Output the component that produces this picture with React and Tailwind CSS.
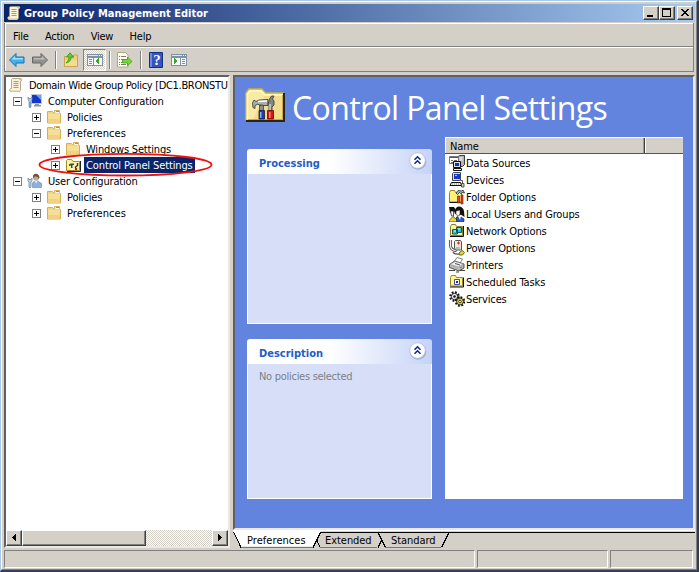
import React from "react";

function ScrollIcon() {
  return (
    <svg width="16" height="16" viewBox="0 0 16 16">
      <path d="M4.500 1.500h8.500l1 1.500-1.500 1v9l-1 1.500H2.500l-1-1.500 1-1.500h1v-9z" fill="#faf3d8" stroke="#9d947a" strokeWidth=".8" />
      <path d="M11 2l2.500-.5.8 1.500H11zM2 13.500h9l.5 1.500H3z" fill="#d6c793" />
      <path d="M5.500 4.500h5M5.500 6.500h5M5.500 8.500h5M5.500 10.500h5" stroke="#a39b80" />
    </svg>
  );
}

function FolderIcon() {
  return (
    <svg width="16" height="16" viewBox="0 0 16 16">
      <path d="M1.500 2.500h5l1 1h1v-2h5v2l1 1v9.500h-13z" fill="#f2d583" stroke="#d3ae5c" />
      <path d="M9.500 2h3.500v2h-3.500z" fill="#fff" />
      <path d="M10 2.500h3" stroke="#6f9cc0" />
      <path d="M2 5h12v9H2z" fill="#f7df98" />
      <path d="M2 10h12v4H2z" fill="#f1d281" />
    </svg>
  );
}

function ToolsFolderIcon() {
  return (
    <svg width="16" height="16" viewBox="0 0 16 16">
      <path d="M1.500 13.500v-10l1-1h4l1.500 2h6.500v9z" fill="#fbf3a2" stroke="#a48e1d" />
      <path d="M15.500 4v10.500H2" fill="none" stroke="#222" />
      <path d="M4 9V7.500L5.500 6.500H9v1.500H7.500v3H6V8.500z" fill="#444" />
      <path d="M12.500 6v2.500l-2 1.500v1" stroke="#333" strokeWidth="1.400" fill="none" />
      <path d="M6 11h2v2H6z" fill="#fff" />
      <path d="M10 11h2v2h-2z" fill="#a21" />
    </svg>
  );
}

function ComputerConfigIcon() {
  return (
    <svg width="16" height="16" viewBox="0 0 16 16">
      <path d="M4 1h11v10H4z" fill="#c3cbd8" />
      <path d="M5 2h9v8H5z" fill="#1736c8" />
      <path d="M9 2h5v5z" fill="#6ba1f5" />
      <path d="M8 11h4v1h2v1.500H7V12h1z" fill="#8e959e" />
      <path d="M1 4v3l1 1v6l1 1 1-1V8l1-1V4L4 5.500H2z" fill="#b4cbdb" stroke="#6d8ba3" strokeWidth=".7" />
      <path d="M2.500 9h1v5h-1z" fill="#4b91c5" />
    </svg>
  );
}

function UserConfigIcon() {
  return (
    <svg width="16" height="16" viewBox="0 0 16 16">
      <circle cx="9" cy="4.500" r="3" fill="#cfa684" />
      <path d="M6 4.500c-.5-5 6-5 6.500 0l-.7 1.500-1-2-3-.8-.8 1.800z" fill="#66503f" />
      <path d="M5.500 14.500V10l2-2h3.500l3.500 2.500v4z" fill="#8ab2dc" stroke="#5d86b3" strokeWidth=".6" />
      <path d="M8 8l1 2.500L10.500 8z" fill="#fff" />
      <path d="M1 5v3l1 1v5l1 1 1-1V9l1-1V5L4 6.500H2z" fill="#b9d2e2" stroke="#63819a" strokeWidth=".7" />
    </svg>
  );
}

function Expander({ open }) {
  return (
    <span className="flex size-[9px] shrink-0 items-center justify-center border border-[#808080] bg-white">
      <svg width="7" height="7" viewBox="0 0 7 7" shapeRendering="crispEdges">
        <path d={open ? "M1 3h5v1H1z" : "M1 3h5v1H1zM3 1h1v5H3z"} fill="#000" />
      </svg>
    </span>
  );
}

const levelPadding = ["pl-[2px]", "pl-[7px]", "pl-[26px]", "pl-[45px]"];

function TreeRow({ level, open, icon, label, tracking = "tracking-[-0.18px]", selected }) {
  return (
    <div className={`flex h-4 items-center ${levelPadding[level]}`}>
      {level > 0 && <Expander open={open} />}
      <span className={level > 0 ? "ml-[5px] shrink-0" : "shrink-0"}>{icon}</span>
      <span className={`ml-[3px] h-4 whitespace-nowrap px-[2px] pt-px leading-4 ${tracking} ${selected ? "bg-[#0a246a] text-white" : ""}`}>
        {label}
      </span>
    </div>
  );
}

function CaptionButton({ children }) {
  return (
    <span className="flex h-[14px] w-4 items-center justify-center border border-t-white border-l-white border-r-[#404040] border-b-[#404040] bg-[#d4d0c8] shadow-[inset_-1px_-1px_0_#808080]">
      <svg width="10" height="10" viewBox="0 0 10 10" shapeRendering="crispEdges">{children}</svg>
    </span>
  );
}

function Separator() {
  return <span className="h-[18px] w-[2px] shrink-0 border-l border-[#808080] bg-white" />;
}

function PaneIcon({ left }) {
  return (
    <svg width="16" height="16" viewBox="0 0 16 16" shapeRendering="crispEdges">
      <path d="M0 2h16v12H0z" fill="#7f91a4" />
      <path d="M1 6h14v7H1z" fill="#f8f8f8" />
      <path d="M1 3h10v1H1z" fill="#dce7f2" />
      <path d="M12 3h1v1h-1zM14 3h1v1h-1z" fill="#fff" />
      {left ? (
        <>
          <path d="M6 5h1v8H6z" fill="#7f91a4" />
          <path d="M2 7h3v1H2zM2 9h3v1H2zM2 11h3v1H2z" fill="#7890ac" />
          <path d="M12 6v6l-4-3z" fill="#38a62a" />
        </>
      ) : (
        <>
          <path d="M9 5h1v8H9z" fill="#7f91a4" />
          <path d="M11 7h3v1h-3zM11 9h3v1h-3zM11 11h3v1h-3z" fill="#7890ac" />
          <path d="M3 6v6l4-3z" fill="#38a62a" />
        </>
      )}
    </svg>
  );
}

function Toolbar() {
  return (
    <div className="flex h-[23px] items-center pt-px pl-[2px]">
      <svg width="18" height="16" viewBox="0 0 18 16">
        <path d="M1.500 8L8 1.500V5h8v6H8v3.500z" fill="#42b3ee" stroke="#1473b4" strokeLinejoin="round" />
        <path d="M3.500 7.500L7 4v2h8v1.500z" fill="#9ce0fb" />
      </svg>
      <svg className="ml-[5px]" width="18" height="16" viewBox="0 0 18 16">
        <path d="M16.500 8L10 1.500V5H1.500v6H10v3.500z" fill="#929292" stroke="#666" strokeLinejoin="round" />
        <path d="M14.500 7.500L11 4v2H3v1.500z" fill="#bcbcbc" />
      </svg>
      <span className="ml-[6px] flex"><Separator /></span>
      <svg className="ml-[6px]" width="16" height="16" viewBox="0 0 16 16">
        <path d="M1.500 4.500h5l1 1h3V3h4v11.500h-13z" fill="#f0cf78" stroke="#cba54c" />
        <path d="M2 8h12v6H2z" fill="#f6dc92" />
        <path d="M3 11c4-1 5-3 5-6h2.500L7 .8 3.500 5H6c0 2-1 4-3 6z" fill="#5fd02f" stroke="#319515" strokeWidth=".8" />
      </svg>
      <span className="ml-[4px] flex h-[22px] w-[23px] items-center justify-center border border-t-[#808080] border-l-[#808080] border-r-white border-b-white bg-[repeating-conic-gradient(#fff_0_25%,#d4d0c8_0_50%)] bg-[length:2px_2px]">
        <PaneIcon left />
      </span>
      <span className="ml-[3px] flex"><Separator /></span>
      <svg className="ml-[5px]" width="17" height="16" viewBox="0 0 17 16">
        <path d="M1.500.5h8l2.500 2.500v12H1.500z" fill="#fffdf0" stroke="#b1a884" />
        <path d="M3 4.500h1m1 0h5M3 7.500h1m1 0h4M3 10.500h1m1 0h3M3 12.500h1m1 0h5" stroke="#777c6c" />
        <path d="M6.500 7.500h5V5l4.500 4.500-4.500 4V11h-5z" fill="#77d43b" stroke="#3c9f1b" strokeWidth=".8" />
      </svg>
      <span className="ml-[7px] flex"><Separator /></span>
      <svg className="ml-[7px]" width="14" height="16" viewBox="0 0 14 16">
        <path d="M.5.500h13v15H.5z" fill="#3355bd" stroke="#162f83" />
        <path d="M1 1h2v14H1z" fill="#6f8ae0" />
        <text x="8" y="13" textAnchor="middle" fontSize="15" fontWeight="bold" fontFamily="Liberation Serif, serif" fill="#fff">?</text>
      </svg>
      <span className="ml-[8px] flex"><PaneIcon /></span>
    </div>
  );
}

function ArrowButton({ d }) {
  return (
    <span className="flex size-4 shrink-0 items-center justify-center border border-t-white border-l-white border-r-[#404040] border-b-[#404040] bg-[#d4d0c8] shadow-[inset_-1px_-1px_0_#808080]">
      <svg width="8" height="8" viewBox="0 0 8 8" shapeRendering="crispEdges"><path d={d} /></svg>
    </span>
  );
}

function TreePane() {
  const folder = <FolderIcon />;
  return (
    <div className="flex h-[473px] w-[226px] flex-col overflow-hidden border-2 border-t-[#606060] border-l-[#606060] border-r-[#ece9e4] border-b-[#ece9e4] bg-white">
      <div className="relative grow">
        <TreeRow level={0} icon={<ScrollIcon />} label="Domain Wide Group Policy [DC1.BRONSTU" tracking="tracking-[-0.32px]" />
        <TreeRow level={1} open icon={<ComputerConfigIcon />} label="Computer Configuration" tracking="tracking-[-0.18px]" />
        <TreeRow level={2} icon={folder} label="Policies" />
        <TreeRow level={2} open icon={folder} label="Preferences" tracking="tracking-[0.08px]" />
        <TreeRow level={3} icon={folder} label="Windows Settings" />
        <TreeRow level={3} icon={<ToolsFolderIcon />} label="Control Panel Settings" tracking="tracking-[-0.12px]" selected />
        <TreeRow level={1} open icon={<UserConfigIcon />} label="User Configuration" />
        <TreeRow level={2} icon={folder} label="Policies" />
        <TreeRow level={2} icon={folder} label="Preferences" tracking="tracking-[0.08px]" />
        <svg className="absolute top-[75px] left-[32px]" width="176" height="26" viewBox="0 0 176 26">
          <ellipse cx="87.500" cy="12.700" rx="86" ry="10.800" fill="none" stroke="#f01010" strokeWidth="1.900" />
        </svg>
      </div>
      <div className="flex h-4 bg-[repeating-conic-gradient(#fff_0_25%,#d4d0c8_0_50%)] bg-[length:2px_2px]">
        <ArrowButton d="M5 0h1v7H5zM4 1h1v5H4zM3 2h1v3H3zM2 3h1v1H2z" />
        <span className="h-4 w-[124px] border border-t-white border-l-white border-r-[#404040] border-b-[#404040] bg-[#d4d0c8] shadow-[inset_-1px_-1px_0_#808080]" />
        <span className="grow" />
        <ArrowButton d="M2 0h1v7H2zM3 1h1v5H3zM4 2h1v3H4zM5 3h1v1H5z" />
      </div>
    </div>
  );
}

function HammerFolder() {
  return (
    <svg width="41" height="36" viewBox="0 0 41 36">
      <path d="M1 33V6l3-4h13l4 4h18v27z" fill="#f9eaa6" />
      <path d="M20 8h17v24H8z" fill="#f3dc8c" />
      <path d="M.8 33V6l3-4h13l4 4h18" fill="none" stroke="#c9b23a" strokeWidth="1.300" />
      <path d="M2.500 32V7l2.500-3h11l4 4h17" fill="none" stroke="#fffac8" strokeWidth="1.500" />
      <path d="M39 6v28H1" fill="none" stroke="#2a2410" strokeWidth="2" />
      <path d="M37.500 8v24.500H3" fill="none" stroke="#c7a950" />
      <path d="M14.500 18h4v7h-4z" fill="#8d9392" stroke="#333" strokeWidth=".7" />
      <path d="M7.500 16l1.500-3 2 1.500 3-1.500 9-.5v6h-5l-1-.5h-3l-1-1-3 1.500v3l-2-1z" fill="#a9aeac" stroke="#333" strokeWidth=".8" />
      <path d="M13 14.500l9-.5" stroke="#fff" strokeWidth="1.300" />
      <path d="M24.500 12l2-3h2.500l-1.500 3 1.500 2v4l-2 2v5h-3v-6l-1-2z" fill="#7f8887" stroke="#333" strokeWidth=".8" />
      <path d="M25 17v7" stroke="#fff" />
      <path d="M14 23.500h5.500V32H14z" fill="#1e3f9d" stroke="#111d45" strokeWidth=".8" />
      <path d="M15 25h1.500v6H15z" fill="#8cb0f5" />
      <path d="M22.500 23.500h6V32h-6z" fill="#d01818" stroke="#5c0b0b" strokeWidth=".8" />
      <path d="M24 25h1.500v6H24z" fill="#fb8a78" />
    </svg>
  );
}

function InfoPanel({ title, height, children }) {
  return (
    <section className={`flex w-[185px] flex-col ${height}`}>
      <header className="flex h-[25px] shrink-0 items-center justify-between rounded-t-[3px] bg-[linear-gradient(90deg,#fff_0%,#fff_45%,#c6d3f7_100%)] pr-[5px] pl-3 font-bold text-[#215dc6]">
        <span className="pt-[4px]">{title}</span>
        <svg className="-mt-[2px]" width="19" height="20" viewBox="0 0 19 20">
          <circle cx="10" cy="10.500" r="8.300" fill="#8798c6" opacity=".65" />
          <circle cx="9.500" cy="9.500" r="7.800" fill="#fff" stroke="#b1bfdf" strokeWidth=".8" />
          <path d="M6.500 8.800l3-3 3 3M6.500 12.800l3-3 3 3" fill="none" stroke="#102d80" strokeWidth="1.600" />
        </svg>
      </header>
      <div className="grow border border-t-0 border-white bg-[#d6dff7] px-[11px] pt-[5px] tracking-[-0.28px] text-[#7c7f88]">{children}</div>
    </section>
  );
}

const K = "#111";
const listIcons = {
  data: (
    <>
      <path d="M9.500 1l1.500-.5h4.500v9l-2 2h-4z" fill="#b5b5b5" stroke={K} strokeWidth=".8" />
      <path d="M10.500 3h3M10.500 5h3" stroke="#fff" />
      <path d="M.5 1.500h9v7h-9z" fill="#fff" stroke="#777" />
      <path d="M1 2h8v1H1z" fill="#3a54b6" />
      <path d="M2 5.500h2m1 0h3M2 7.500h2" stroke="#666" />
      <path d="M4.500 6.500h7v6h-7z" fill="#ddd" stroke={K} />
      <path d="M6 8h4v3H6z" fill="#1231c9" />
      <path d="M4.500 13.500h8v2h-8z" fill="#eee" stroke={K} />
    </>
  ),
  devices: (
    <>
      <path d="M3.500 1.500l1-1h7v8h-8z" fill="#ddd" stroke="#444" />
      <path d="M5 2h6v5H5z" fill="#1635d2" />
      <path d="M6 3h2v1H6z" fill="#b6d0ff" />
      <path d="M2.500 10.500h9l1 3H1z" fill="#eee" stroke={K} />
      <path d="M3 12h8" stroke="#888" strokeDasharray="1 1" />
      <path d="M12 8.500h1.500v3" fill="none" stroke="#555" />
      <path d="M12.500 11.500h2.500v3.500h-2.500z" fill="#ccc" stroke="#333" strokeWidth=".8" />
    </>
  ),
  folder: (
    <>
      <path d="M.5 13V3.500l1-2h4l1 2h6V13z" fill="#fff27a" stroke="#9b8614" />
      <path d="M.5 13.500h11" stroke={K} />
      <path d="M7 4l2-2.500 4 .5 1-1 1.500 3-2-.5-2 1-1-1-2 2z" fill="#8bc2c8" stroke={K} strokeWidth=".7" />
      <path d="M8.500 7h2v7h-2zM12 6h2v9h-2z" fill="#e5402a" stroke="#721008" strokeWidth=".6" />
    </>
  ),
  users: (
    <>
      <path d="M0 1l5 0 3 5-2 2-1-3-4 2z" fill={K} />
      <path d="M1.500 5l3 0v5h-2z" fill="#fff" stroke={K} strokeWidth=".7" />
      <path d="M6 5c0-6 8-6 9 0l.5 6-3-2-6-1z" fill={K} />
      <path d="M7 5l4-1v4l-1.500 2L7 8.500z" fill="#fff8df" stroke={K} strokeWidth=".5" />
      <path d="M0 14.500l4-4 5 4V16H0z" fill="#e5d831" stroke={K} strokeWidth=".6" />
      <path d="M7.500 15.500V11l3-1 4.500 3v2.500z" fill="#2f55d8" stroke={K} strokeWidth=".6" />
      <path d="M9 10l2 4 1-4z" fill="#fff" />
    </>
  ),
  network: (
    <>
      <path d="M1.500 12.500V3.500l1-2h4l1 2h6v9z" fill="#fff39a" stroke="#8b7d26" />
      <path d="M14.500 3v10.500H1" stroke={K} fill="none" />
      <path d="M7.500 4.500h5v5h-5zM3.500 6.500h5v4.500h-5z" fill="#24c8d3" stroke="#0b5860" />
      <path d="M9 6h2M5 8h2" stroke="#c9ffff" />
    </>
  ),
  power: (
    <>
      <path d="M1.500 0v5c0 4 2 5.500 6 5.500" fill="none" stroke="#444" strokeWidth="2.800" />
      <path d="M1.500 0v5c0 4 2 5.500 5.500 5.500" fill="none" stroke="#eee" strokeWidth="1.200" />
      <path d="M5.500 1.500l1-1h5l1 1.500v8h-6l-1-2z" fill="#ece9dd" stroke="#555" />
      <path d="M8 3h3M9.500 1.500v3" stroke="#d62b17" />
      <path d="M8 7v2M10 7v2" stroke="#888" />
      <path d="M4 12c1 2.500 3 2.500 7 2" fill="none" stroke="#555" strokeWidth="1.200" />
      <path d="M10 13l3-2.500 2.500 2L13.500 15h-3z" fill="#e5d536" stroke="#6e681a" />
    </>
  ),
  printer: (
    <>
      <path d="M5 5l3-4.500 5.500 1.500-3 5z" fill="#fff" stroke="#666" strokeWidth=".8" />
      <path d="M.5 7.500l5-3.500 9.500 3v4l-5 3-9.500-3.500z" fill="#b9b9b4" stroke="#333" strokeWidth=".8" />
      <path d="M1 7.500l5-3 8.500 2.500-5 3z" fill="#eee" stroke="#777" strokeWidth=".5" />
      <path d="M6 6.500l5 1.500" stroke="#555" />
      <path d="M11 11l2-1" stroke="#32b325" />
      <path d="M0 13.500h6m5 0h5M7 15h3" stroke="#444" />
    </>
  ),
  tasks: (
    <>
      <path d="M1.500 12V3.500l1-2h4l1 2h6V12z" fill="#fff39a" stroke="#978925" />
      <path d="M14.500 3.500v9.500H1" fill="none" stroke={K} />
      <path d="M5.500 5.500h5v5h-5z" fill="#fff" stroke="#4b4f8d" />
      <path d="M7 7h2v2H7z" fill="#1835a6" />
    </>
  ),
  services: (
    <>
      <circle cx="5.500" cy="5.500" r="4" fill="none" stroke={K} strokeWidth="2.600" strokeDasharray="1.700 1.440" />
      <circle cx="5.500" cy="5.500" r="3.200" fill="#e4e4e4" stroke={K} strokeWidth=".8" />
      <circle cx="5.500" cy="5.500" r="1.200" fill={K} />
      <circle cx="11" cy="10.500" r="4" fill="none" stroke={K} strokeWidth="2.600" strokeDasharray="1.700 1.440" />
      <circle cx="11" cy="10.500" r="3.400" fill="#e3d93e" stroke={K} strokeWidth=".8" />
      <circle cx="11" cy="10.500" r="1.300" fill="#fff" stroke={K} strokeWidth=".8" />
    </>
  ),
};

const items = [
  ["data", "Data Sources"],
  ["devices", "Devices"],
  ["folder", "Folder Options"],
  ["users", "Local Users and Groups"],
  ["network", "Network Options"],
  ["power", "Power Options"],
  ["printer", "Printers"],
  ["tasks", "Scheduled Tasks"],
  ["services", "Services"],
];

function SettingsList() {
  return (
    <div className="h-[362px] w-[238px] bg-white tracking-[-0.14px]">
      <div className="flex h-[17px] border-t border-b border-t-white border-b-[#555] bg-[#d4d0c8]">
        <span className="w-[200px] border-r border-l border-l-white border-r-[#404040] pl-1 leading-[17px] shadow-[inset_-1px_0_0_#999]">Name</span>
        <span className="grow border-l border-white" />
      </div>
      {items.map(([icon, label]) => (
        <div key={icon} className="flex h-[17px] items-center pl-[4px]">
          <svg className="shrink-0" width="16" height="16" viewBox="0 0 16 16">{listIcons[icon]}</svg>
          <span className="pt-[2px] pl-[1px] leading-[17px] whitespace-nowrap">{label}</span>
        </div>
      ))}
    </div>
  );
}

function PreferencesPane() {
  return (
    <div className="h-[455px] w-[462px] border-2 border-t-[#606060] border-l-[#606060] border-r-[#ece9e4] border-b-[#ece9e4] bg-[#6284de]">
      <div className="flex h-[60px] items-start pt-[10px] pl-[10px]">
        <HammerFolder />
        <h1 className="ml-[6px] pt-px font-['Open_Sans',sans-serif] text-[32px] leading-[40px] tracking-[-0.62px] whitespace-nowrap text-white [font-stretch:91.5%]">Control Panel Settings</h1>
      </div>
      <div className="flex pl-3">
        <div className="flex flex-col gap-[15px] pt-3">
          <InfoPanel title="Processing" height="h-[175px]" />
          <InfoPanel title="Description" height="h-[160px]">No policies selected</InfoPanel>
        </div>
        <div className="ml-[13px]"><SettingsList /></div>
      </div>
    </div>
  );
}

function Tabs() {
  return (
    <div className="grid h-[18px] w-[462px] *:col-start-1 *:row-start-1">
      <svg width="462" height="18" viewBox="0 0 462 18">
        <path d="M87 2.500h375" stroke="#000" />
        <path d="M0 0h462v1H0zM0 1h88l-8 15.500H8z" fill="#fff" />
        <path d="M8 17.500h72M87 17.500h57M152 17.500h56" stroke="#777" />
        <path d="M.5 2L8 17.500M87.500 2.500L80 17.500M83.700 10l3.700 7.500M145 2.500l7.500 15M148.700 10L145 17.500M216 2.500l-7.500 15" stroke="#000" fill="none" shapeRendering="crispEdges" />
      </svg>
      <div className="z-10 flex leading-[22px]">
        <span className="w-[78px] pl-[14px] tracking-[0.05px]">Preferences</span>
        <span className="ml-[14px] w-[66px] tracking-[-0.05px]">Extended</span>
        <span className="tracking-[-0.05px]">Standard</span>
      </div>
    </div>
  );
}

export default function App() {
  return (
    <div className="flex h-[572px] w-[699px] flex-col overflow-hidden border-t border-r-2 border-b-2 border-l border-t-[#a9c9ea] border-r-[#343c50] border-b-[#34405d] border-l-[#a9c9ea] bg-[#d4d0c8] font-['DejaVu_Sans_Condensed','DejaVu_Sans',sans-serif] text-[11px] leading-4 text-black [font-stretch:condensed]">
      <div className="flex grow flex-col border border-white border-r-[#808080] border-b-[#808080] pt-[2px] pl-[2px]">
        <div className="flex h-[18px] w-[691px] items-center bg-[linear-gradient(90deg,#0a246a,#a6caf0)] pr-[2px] pl-[2px] font-bold text-white">
          <ScrollIcon />
          <span className="ml-[2px] pt-px">Group Policy Management Editor</span>
          <span className="ml-auto flex">
            <CaptionButton><path d="M1 7h6v2H1z" /></CaptionButton>
            <CaptionButton><path d="M0 0h9v9H0zM1 2v6h7V2z" fillRule="evenodd" /></CaptionButton>
            <span className="ml-[2px] flex"><CaptionButton><path d="M1 1h2v1h1v1h2V2h1V1h2v1H8v1H7v1H6v1h1v1h1v1h1v1H7V7H6V6H4v1H3v1H1V7h1V6h1V5h1V4H3V3H2V2H1z" /></CaptionButton></span>
          </span>
        </div>
        <div className="mt-[1px] w-[690px] border-r border-b border-l border-[#808080]">
          <div className="flex h-6 items-center gap-[16.4px] border-t border-l border-white border-b border-b-[#808080] pt-[3px] pl-[7px] tracking-[-0.25px]">
            <span>File</span><span>Action</span><span>View</span><span>Help</span>
          </div>
          <div className="border-t border-l border-white"><Toolbar /></div>
        </div>
        <div className="mt-[3px] flex h-[473px] gap-[3px]">
          <TreePane />
          <div className="flex flex-col"><PreferencesPane /><Tabs /></div>
        </div>
        <div className="mt-[2px] flex h-[18px] gap-[2px]">
          <span className="w-[471px] border border-white border-t-[#808080] border-l-[#808080]" />
          <span className="w-[131px] border border-white border-t-[#808080] border-l-[#808080]" />
          <span className="w-[83px] border border-white border-t-[#808080] border-l-[#808080]" />
        </div>
      </div>
    </div>
  );
}
